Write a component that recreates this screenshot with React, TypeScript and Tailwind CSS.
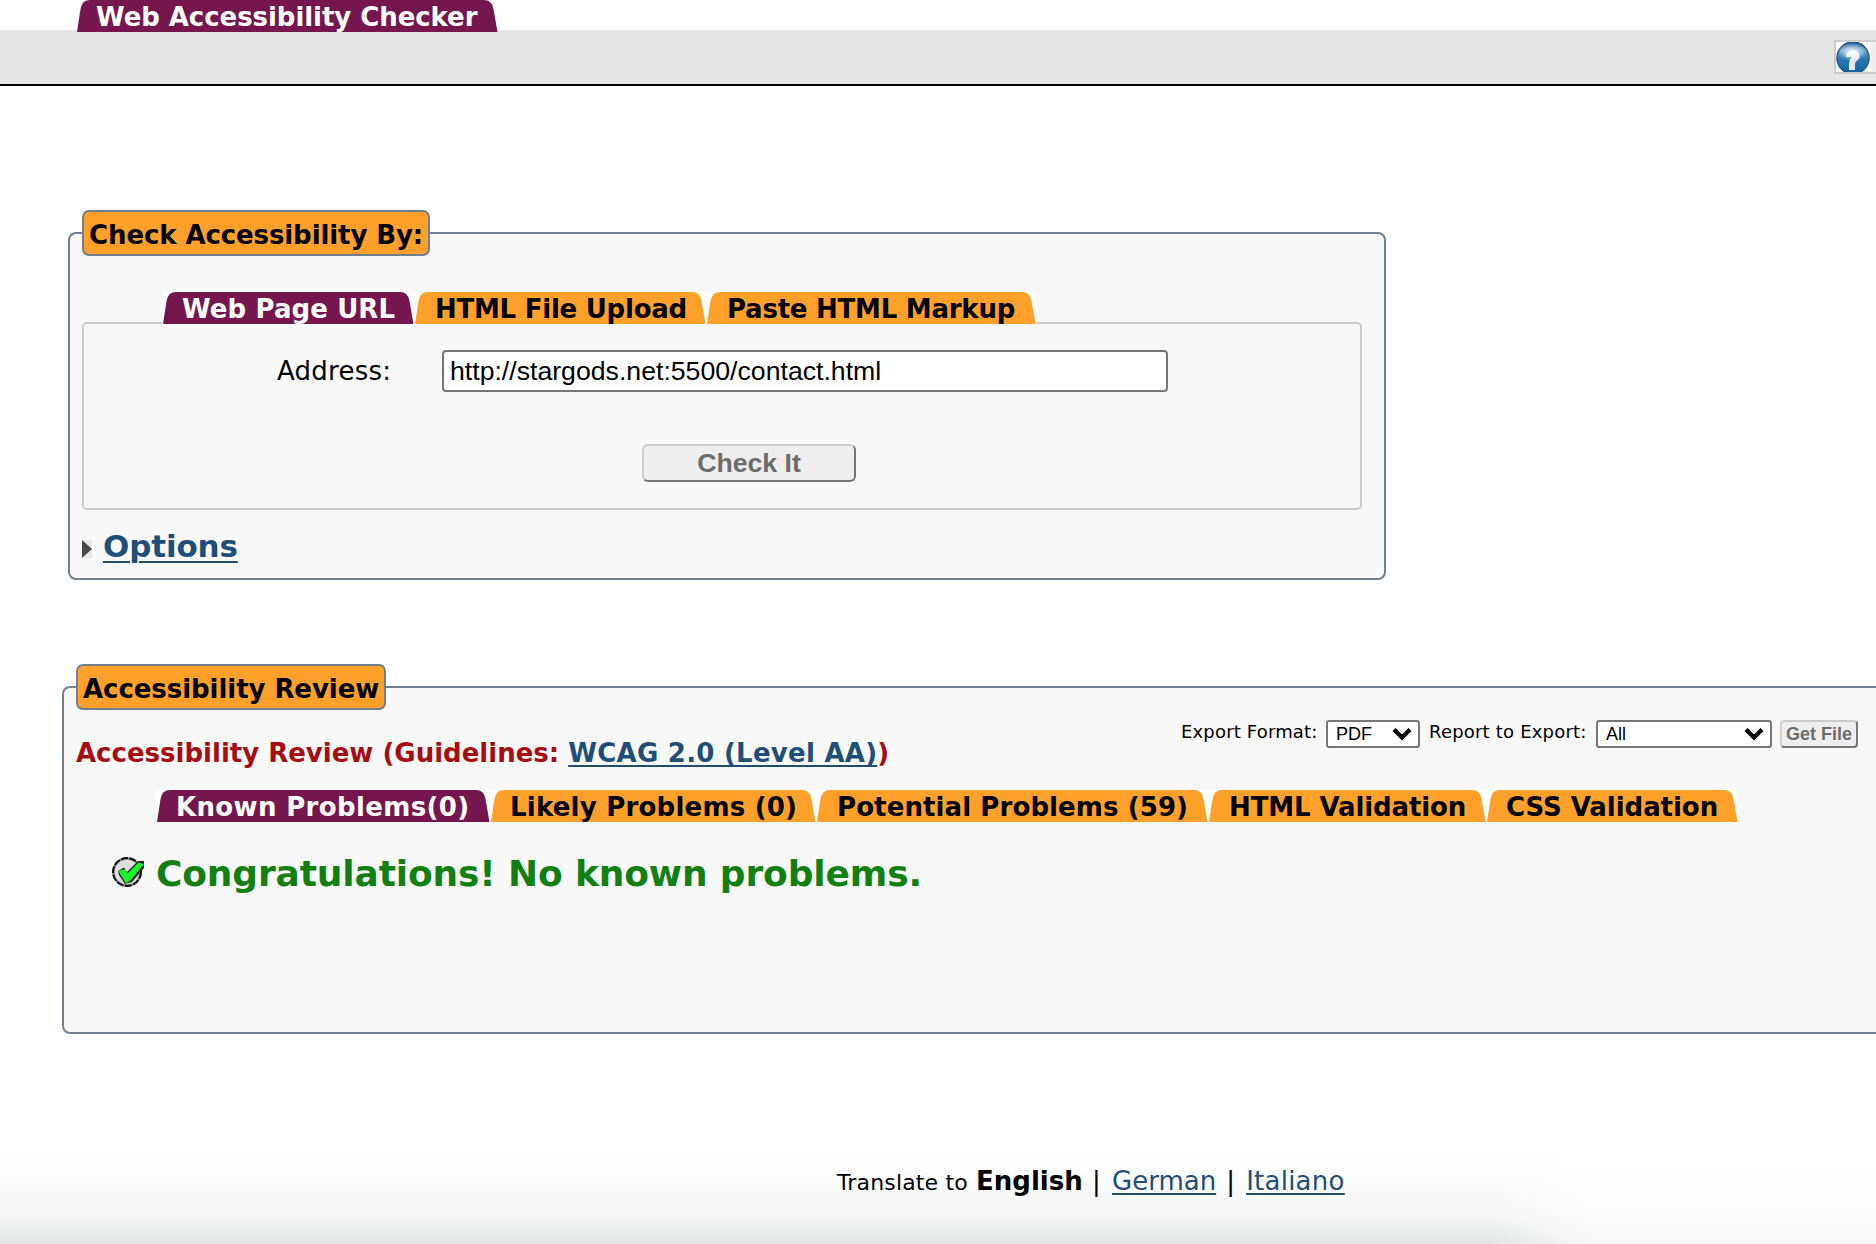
import React from "react";

function Tab({
  children,
  active = false,
  plain = false,
  className = "",
}: {
  children: React.ReactNode;
  active?: boolean;
  plain?: boolean;
  className?: string;
}) {
  return (
    <div className={`relative h-8 shrink-0 whitespace-nowrap text-[26px] leading-[34px] font-bold ${plain ? "" : "bg-white"} ${active ? "text-white" : "text-black"} ${className}`}>
      <svg className={`absolute top-0 left-0 h-8 w-4 ${active ? "text-[#76164f]" : "text-[#ffa02b]"}`} viewBox="0 0 16 32">
        <path d="M1 32L4.500 9Q6 0 14 0H16V32Z" fill="currentColor" />
      </svg>
      <div className={`absolute inset-y-0 right-[15px] left-[15px] ${active ? "bg-[#76164f]" : "bg-[#ffa02b]"}`} />
      <svg className={`absolute top-0 right-0 h-8 w-4 ${active ? "text-[#76164f]" : "text-[#ffa02b]"}`} viewBox="0 0 16 32">
        <path d="M15.500 32L11.500 9Q10 0 2 0H0V32Z" fill="currentColor" />
      </svg>
      <span className="relative">{children}</span>
    </div>
  );
}

function Legend({ children, className = "" }: { children: React.ReactNode; className?: string }) {
  return (
    <h2 className={`-mt-6 h-[46px] rounded-[7px] border-2 border-[#708090] bg-[#ffa02b] pl-[5px] text-[26px] leading-[46px] font-bold whitespace-nowrap ${className}`}>
      {children}
    </h2>
  );
}

function SelectBox({ label, className = "" }: { label: string; className?: string }) {
  return (
    <div className={`flex h-7 items-center justify-between rounded-[3px] border-2 border-[#767676] bg-white pr-[6px] pl-2 font-['Liberation_Sans'] text-[18px] leading-6 ${className}`}>
      <span>{label}</span>
      <svg className="h-[14px] w-5" viewBox="0 0 20 14" fill="none" stroke="black" strokeWidth="4.200">
        <path d="M2 2.500L10 10.500L18 2.500" />
      </svg>
    </div>
  );
}

function HelpIcon() {
  return (
    <svg className="h-[30px] w-[40px]" viewBox="0 0 40 30">
      <defs>
        <linearGradient id="ball" x1="0" y1="0" x2="0" y2="1">
          <stop offset="0" stopColor="#1c5788" />
          <stop offset="0.25" stopColor="#6fa5cc" />
          <stop offset="0.5" stopColor="#2d7db8" />
          <stop offset="1" stopColor="#0f5f9c" />
        </linearGradient>
        <radialGradient id="shine">
          <stop offset="0" stopColor="#fff" stopOpacity="0.95" />
          <stop offset="1" stopColor="#fff" stopOpacity="0" />
        </radialGradient>
      </defs>
      <path d="M0 0H34V30H0Z" fill="#fff" />
      <circle cx="17" cy="16" r="16" fill="url(#ball)" stroke="#245b85" strokeWidth="1.500" />
      <path d="M13 15Q13 11.500 17.500 11.500Q21.500 12 20.500 15Q16 18 16 22V28" fill="none" stroke="#e6eaee" strokeWidth="6" />
      <ellipse cx="16" cy="10" rx="14" ry="9" fill="url(#shine)" />
    </svg>
  );
}

function CheckIcon() {
  return (
    <svg className="-mt-[3px] h-8 w-8 shrink-0" viewBox="0 0 32 32">
      <circle cx="15" cy="16" r="13.500" fill="#dedede" stroke="#8a8a8a" strokeWidth="2.500" />
      <circle cx="15" cy="16" r="14" fill="none" stroke="#111" strokeWidth="2" strokeDasharray="7 1.500" />
      <path d="M6 15L12 11.500L15 16L26 5H32V12L20 26L13 28L7 19Z" fill="#222" />
      <path d="M9 16L12.500 15L15 20.500L27 8.500L29 9L18 22.500L14.500 25Z" fill="#17f52a" stroke="#17f52a" strokeWidth="3.500" />
    </svg>
  );
}

export default function App() {
  return (
    <div className="flex h-[1244px] w-[1876px] flex-col overflow-hidden bg-white font-['DejaVu_Sans'] text-black">
      <header className="flex h-[86px] flex-col border-b-2 border-black bg-[linear-gradient(#fff_30px,#e5e5e5_30px)]">
        <div className="flex pl-[76px]">
          <Tab active plain className="w-[422px] pl-[20px] tracking-[-0.060px]">
            Web Accessibility Checker
          </Tab>
        </div>
        <div className="mt-2 flex h-[34px] w-[42px] shrink-0 self-end border-2 border-r-0 border-[#ccc] bg-[#efefef]">
          <HelpIcon />
        </div>
      </header>

      <section className="mt-[146px] ml-[68px] flex h-[348px] w-[1318px] shrink-0 flex-col rounded-[8px] border-2 border-[#708090] bg-[#f8f8f8] px-3">
        <Legend className="w-[348px] tracking-[-0.100px]">Check Accessibility By:</Legend>
        <nav className="z-10 mt-9 flex pl-20">
          <Tab active className="w-[252px] pl-[20px] tracking-[0.100px]">Web Page URL</Tab>
          <Tab className="w-[292px] pl-[21px] tracking-[-0.250px]">HTML File Upload</Tab>
          <Tab className="w-[330px] pl-[21px] tracking-[-0.240px]">Paste HTML Markup</Tab>
        </nav>
        <div className="-mt-[2px] flex h-[188px] w-[1280px] shrink-0 flex-col rounded-[5px] border-2 border-[#ccc] pt-[26px]">
          <div className="flex items-center pl-[193px] text-[26px]">
            <label className="w-[165px] leading-[38px] tracking-[0.250px] whitespace-nowrap">Address:</label>
            <div className="h-[42px] w-[726px] rounded-[4px] border-2 border-[#767676] bg-white pl-[6px] font-['Liberation_Sans'] text-[26.660px] leading-[38px]">
              http://stargods.net:5500/contact.html
            </div>
          </div>
          <button className="mt-[52px] ml-[558px] h-[38px] w-[214px] rounded-[6px] border-2 border-[#767676] border-t-[#ccc] border-l-[#ccc] bg-[#eee] font-['Liberation_Sans'] text-[26.660px] leading-[34px] font-bold text-[#6c6c6c]">
            Check It
          </button>
        </div>
        <div className="mt-[18px] flex h-[38px] items-center">
          <svg className="mt-[3px] h-[18px] w-[10px]" viewBox="0 0 10 18">
            <path d="M0 0H10V18H0Z" fill="#e8e8ea" />
            <path d="M0 0L10 9L0 18Z" fill="#484848" />
          </svg>
          <a className="-mt-[2px] ml-[11px] text-[31px] leading-[38px] font-bold tracking-[-0.150px] text-[#1f4e79] underline decoration-2 underline-offset-[4px]">Options</a>
        </div>
      </section>

      <section className="mt-[106px] ml-[62px] flex h-[348px] w-[1830px] shrink-0 flex-col rounded-[8px] border-2 border-[#708090] bg-[#f8f8f8] pl-3">
        <Legend className="w-[310px] tracking-[-0.060px]">Accessibility Review</Legend>
        <div className="mt-[10px] flex h-[52px] items-start">
          <h3 className="mt-[17px] w-[1105px] text-[26px] leading-8 font-bold whitespace-nowrap text-[#a50d12]">
            Accessibility Review (Guidelines:{" "}
            <a className="tracking-[0.260px] text-[#1f4e79] underline decoration-2 underline-offset-[3px]">WCAG 2.0 (Level AA)</a>)
          </h3>
          <div className="flex h-7 text-[18px] leading-6 whitespace-nowrap">
            <label className="w-[145px] tracking-[0.170px]">Export Format:</label>
            <SelectBox label="PDF" className="w-[94px]" />
            <label className="ml-[9px] w-[167px] tracking-[0.200px]">Report to Export:</label>
            <SelectBox label="All" className="w-[176px]" />
            <button className="ml-2 w-[78px] rounded-[4px] border-2 border-[#767676] border-t-[#ccc] border-l-[#ccc] bg-[#eee] font-['Liberation_Sans'] text-[18px] leading-6 font-bold text-[#6c6c6c]">
              Get File
            </button>
          </div>
        </div>
        <nav className="mt-[18px] flex pl-20">
          <Tab active className="w-[334px] pl-[20px] tracking-[0.350px]">Known Problems(0)</Tab>
          <Tab className="w-[326px] pl-[20px] tracking-[0.220px]">Likely Problems (0)</Tab>
          <Tab className="w-[392px] pl-[21px] tracking-[0.100px]">Potential Problems (59)</Tab>
          <Tab className="w-[278px] pl-[21px] tracking-[-0.120px]">HTML Validation</Tab>
          <Tab className="w-[252px] pl-[20px] tracking-[-0.050px]">CSS Validation</Tab>
        </nav>
        <div className="mt-[29px] flex h-11 items-center pl-9">
          <CheckIcon />
          <span className="mt-px ml-3 text-[36px] leading-[44px] font-bold tracking-[-0.140px] whitespace-nowrap text-[#108010]">
            Congratulations! No known problems.
          </span>
        </div>
      </section>

      <footer className="mt-[110px] flex grow items-start bg-[linear-gradient(to_right,transparent_1490px,rgba(255,255,255,0.75)_1590px),linear-gradient(#fff_0px,#fefefe_20px,#f6f6f6_70px,#ebecec_88px,#e2e2e3_100px)] pt-[21px] pl-[837px] text-[26px] leading-8 whitespace-nowrap">
        <span className="w-[139px] text-[22px] leading-[36px] tracking-[0.150px]">Translate to</span>
        <b className="w-[116px]">English</b>
        <span className="w-[20px]">|</span>
        <a className="text-[#1f4e79] underline decoration-2 underline-offset-[3px]">German</a>
        <span className="ml-[10px] w-[20px]">|</span>
        <a className="tracking-[0.250px] text-[#1f4e79] underline decoration-2 underline-offset-[3px]">Italiano</a>
      </footer>
    </div>
  );
}
